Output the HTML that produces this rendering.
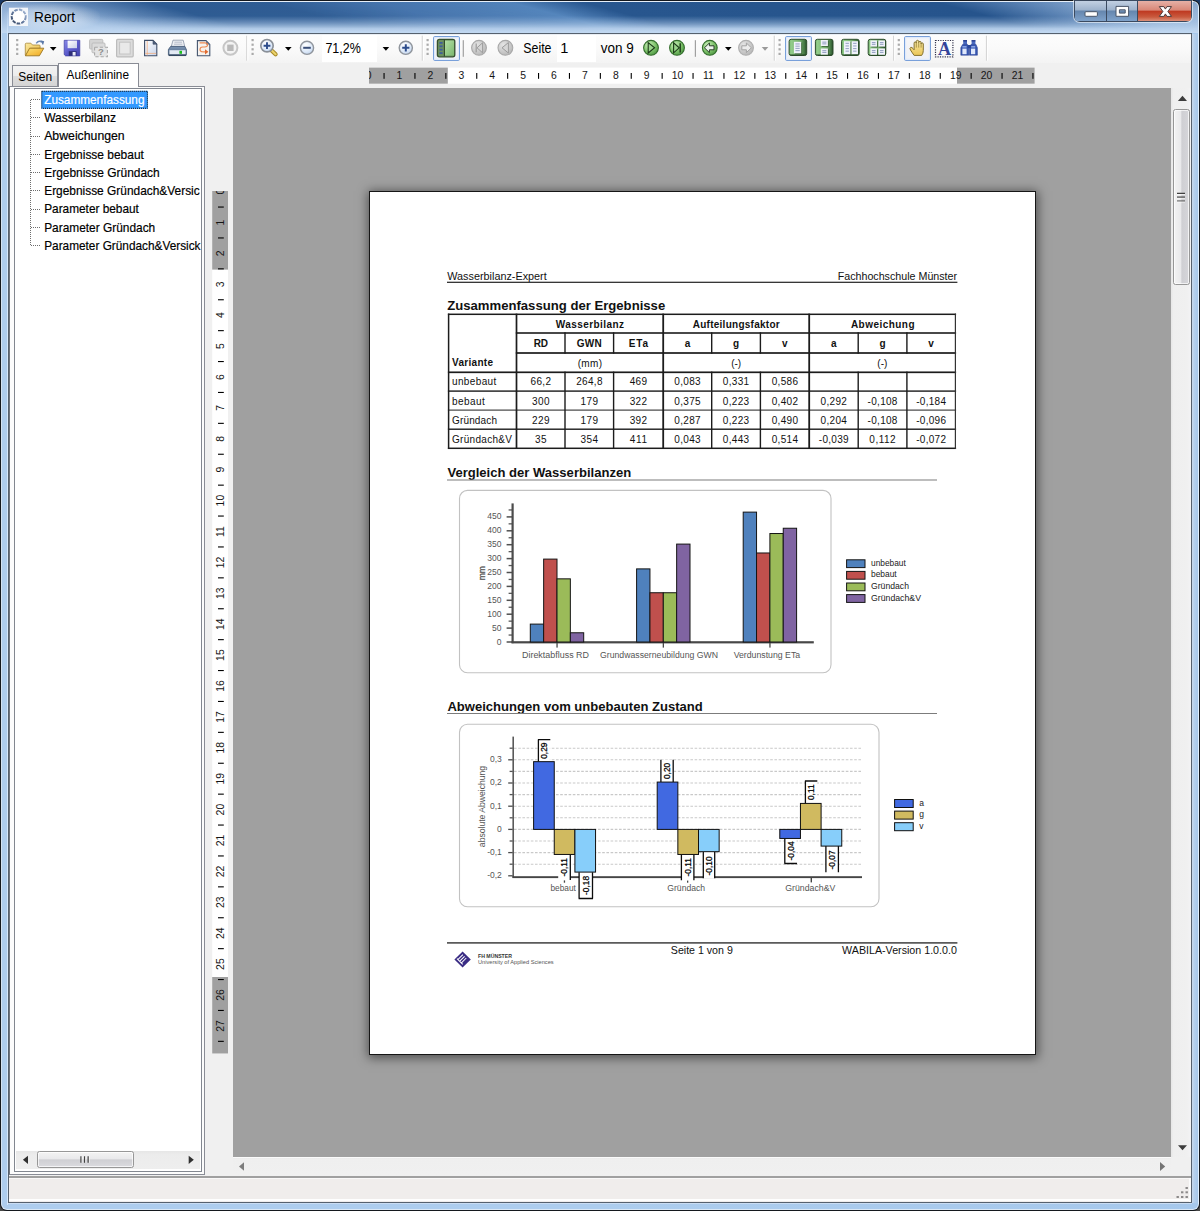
<!DOCTYPE html><html><head><meta charset="utf-8"><title>Report</title><style>
*{margin:0;padding:0;box-sizing:border-box}
html,body{width:1200px;height:1211px;overflow:hidden;background:#000}
body{font-family:"Liberation Sans", sans-serif;font-size:14px;color:#000}
#w{position:relative;width:1200px;height:1211px;overflow:hidden;background:#b1cfee}
.a{position:absolute}
svg{position:absolute;left:0;top:0;overflow:visible}
svg text{font-family:"Liberation Sans", sans-serif;white-space:pre}
</style></head><body><div id="w">
<div class="a" style="left:0;top:0;width:1200px;height:1211px;background:linear-gradient(to bottom,#1b3a66 0,#1d3050 50%,#4a4a4a 100%)"></div>
<div class="a" style="left:0;top:0;width:1200px;height:1211px;border-radius:7px 7px 7px 7px;background:#14181e"></div>
<div class="a" style="left:1px;top:1px;width:1198px;height:1209px;border-radius:6px;background:#dbe8f6"></div>
<div class="a" style="left:2px;top:2px;width:1196px;height:1207px;border-radius:5px;background:linear-gradient(to right,#aecdee 0,#adcdee 50%,#a6c8ec 100%)"></div>
<div class="a" style="left:2px;top:2px;width:1196px;height:31px;border-radius:5px 5px 0 0;background:linear-gradient(to bottom,#86a6ce 0,#a0bddf 50%,#c2d9f2 100%)"></div>
<div class="a" style="left:2px;top:2px;width:1196px;height:31px;border-radius:5px 5px 0 0;background:linear-gradient(15deg,rgba(44,90,145,0) 0,rgba(44,90,145,0) 9%,rgba(60,105,160,.55) 13.7%,rgba(40,86,142,.95) 20%,rgba(42,88,144,.95) 29%,rgba(62,110,168,.9) 37.4%,rgba(72,124,182,.85) 47.5%,rgba(40,86,142,1) 53%,rgba(38,84,140,1) 80%,rgba(60,105,160,.7) 85.5%,rgba(110,150,195,.3) 91%,rgba(130,170,210,0) 97%);-webkit-mask-image:linear-gradient(to bottom,#000 0,#000 45%,rgba(0,0,0,.5) 68%,rgba(0,0,0,.06) 86%,transparent 94%);mask-image:linear-gradient(to bottom,#000 0,#000 45%,rgba(0,0,0,.5) 68%,rgba(0,0,0,.06) 86%,transparent 94%)"></div>
<div class="a" style="left:6px;top:1px;width:1188px;height:1px;background:rgba(255,255,255,.32)"></div>
<div class="a" style="left:7px;top:10px;width:1px;height:1195px;background:linear-gradient(to bottom,rgba(214,231,251,0) 0,#d6e7fb 30px,#d6e7fb 100%)"></div>
<div class="a" style="left:1192px;top:34px;width:6px;height:1169px;background:linear-gradient(to right,#c8d9ec 0,#b4cfec 40%,#a6c7ea 100%)"></div>
<div class="a" style="left:1198px;top:8px;width:1px;height:1196px;background:#e0f0ff"></div>
<div class="a" style="left:1px;top:8px;width:1px;height:1196px;background:#d3e2f2"></div>
<div class="a" style="left:8px;top:33px;width:1184px;height:1169.8px;background:#56616e"></div>
<div class="a" style="left:9px;top:34px;width:1182px;height:1167.5px;background:#f0f0f0"></div>
<div class="a" style="left:4px;top:3px;width:96px;height:28px;border-radius:14px;background:radial-gradient(ellipse at center,rgba(255,255,255,.45) 0,rgba(255,255,255,.25) 45%,rgba(255,255,255,0) 75%)"></div>
<svg width="1200" height="34" viewBox="0 0 1200 34"><defs><linearGradient id="icG" x1="0" y1="1" x2="1" y2="0"><stop offset="0" stop-color="#2f3f5c"/><stop offset=".55" stop-color="#6f86ac"/><stop offset="1" stop-color="#a9bcd8"/></linearGradient></defs><rect x="8.9" y="7.7" width="19.1" height="18.3" fill="#f3f6fa"/><circle cx="18.7" cy="16.6" r="7" fill="#fff" stroke="url(#icG)" stroke-width="2" stroke-dasharray="3.6 1.1"/><circle cx="18.9" cy="16.4" r="5.5" fill="#fff"/><text x="34.1" y="21.8" font-size="14.6" fill="#000" font-weight="normal" text-anchor="start" textLength="41" lengthAdjust="spacingAndGlyphs">Report</text></svg>
<svg width="1200" height="34" viewBox="0 0 1200 34"><defs><linearGradient id="cbG" x1="0" y1="0" x2="0" y2="1"><stop offset="0" stop-color="#c2d0e2"/><stop offset=".45" stop-color="#9db2cc"/><stop offset=".5" stop-color="#6586ae"/><stop offset="1" stop-color="#7fa2ca"/></linearGradient><linearGradient id="cbR" x1="0" y1="0" x2="0" y2="1"><stop offset="0" stop-color="#e6b0a6"/><stop offset=".45" stop-color="#d98878"/><stop offset=".52" stop-color="#bf3a22"/><stop offset=".8" stop-color="#c95a3e"/><stop offset="1" stop-color="#dc907a"/></linearGradient><clipPath id="cbC"><path d="M1074 0H1192V16a6 6 0 0 1-6 6H1080a6 6 0 0 1-6-6Z"/></clipPath></defs><path d="M1073 0H1193V16.5a6.5 6.5 0 0 1-6.5 6.5H1079.5a6.5 6.5 0 0 1-6.5-6.5Z" fill="rgba(255,255,255,.55)"/><g clip-path="url(#cbC)"><rect x="1074" y="0" width="118" height="22" fill="#3b4a60"/><rect x="1075" y="1" width="31" height="20" fill="url(#cbG)"/><rect x="1107" y="1" width="30" height="20" fill="url(#cbG)"/><rect x="1138" y="1" width="53" height="20" fill="url(#cbR)"/></g><rect x="1085" y="11.7" width="12.4" height="4.6" rx="1" fill="#fff" stroke="#4a5668" stroke-width="1"/><path d="M1116 6.4h12.6v9.9h-12.6Z M1119.4 9.8v3.3h5.8v-3.3Z" fill="#fff" fill-rule="evenodd" stroke="#4a5668" stroke-width="1"/><path d="M1159.3 6.6h4.6l1.5 2.5 1.5-2.5h4.6l-3.6 4.9 3.6 4.9h-4.6l-1.5-2.5-1.5 2.5h-4.6l3.6-4.9Z" fill="#fff" stroke="#4c3a3a" stroke-width="1" stroke-linejoin="round"/></svg>
<div class="a" style="left:9px;top:1176px;width:1182px;height:2px;background:#a0a0a0"></div>
<div class="a" style="left:9px;top:1178px;width:1182px;height:23.5px;background:#f0edec"></div><div class="a" style="left:9px;top:1178px;width:1182px;height:1px;background:#f9f8f8"></div>
<div class="a" style="left:9px;top:1199.4px;width:1182px;height:2.1px;background:#fefefe"></div>
<div class="a" style="left:1189.4px;top:1178px;width:1.6px;height:23.5px;background:#fbfbfb"></div>
<svg width="1200" height="1211" viewBox="0 0 1200 1211"><rect x="1185.5" y="1187" width="2.4" height="2" fill="#8c8a8a"/><rect x="1181" y="1191.3" width="2.4" height="2" fill="#8c8a8a"/><rect x="1185.5" y="1191.3" width="2.4" height="2" fill="#8c8a8a"/><rect x="1176.5" y="1196" width="2.4" height="2" fill="#8c8a8a"/><rect x="1181" y="1196" width="2.4" height="2" fill="#8c8a8a"/><rect x="1185.5" y="1196" width="2.4" height="2" fill="#8c8a8a"/></svg>
<div class="a" style="left:8px;top:1203px;width:1184px;height:1px;background:#c9dcf3"></div>
<div class="a" style="left:9px;top:34px;width:1182px;height:29px;background:linear-gradient(to bottom,#fdfdfd 0,#fafafa 50%,#f3f3f3 100%)"></div>
<div class="a" style="left:9px;top:34px;width:1182px;height:1px;background:#e9eef4"></div>
<div class="a" style="left:322px;top:35px;width:55px;height:27px;background:#fff"></div>
<div class="a" style="left:557px;top:35px;width:39px;height:27px;background:#fff"></div>
<div class="a" style="left:433px;top:35.6px;width:26.9px;height:25.5px;border:1.4px solid #79a0da;border-radius:1.8px;background:linear-gradient(to bottom,#f6f6f8 0,#f2f2f5 60%,#eef1f7 100%);box-shadow:inset 0 0 0 1.2px #dfeafb"></div>
<div class="a" style="left:785px;top:35.6px;width:26.9px;height:25.5px;border:1.4px solid #79a0da;border-radius:1.8px;background:linear-gradient(to bottom,#f6f6f8 0,#f2f2f5 60%,#eef1f7 100%);box-shadow:inset 0 0 0 1.2px #dfeafb"></div>
<div class="a" style="left:904.1px;top:35.6px;width:26.9px;height:25.5px;border:1.4px solid #79a0da;border-radius:1.8px;background:linear-gradient(to bottom,#f6f6f8 0,#f2f2f5 60%,#eef1f7 100%);box-shadow:inset 0 0 0 1.2px #dfeafb"></div>
<svg width="1200" height="70" viewBox="0 0 1200 70"><defs>
<linearGradient id="gFold" x1="0" y1="0" x2="1" y2="1"><stop offset="0" stop-color="#fbe9a0"/><stop offset="1" stop-color="#e8b840"/></linearGradient>
<linearGradient id="gFold2" x1="0" y1="0" x2="1" y2="1"><stop offset="0" stop-color="#fde27a"/><stop offset="1" stop-color="#f0a820"/></linearGradient>
<linearGradient id="gSave" x1="0" y1="0" x2="1" y2="1"><stop offset="0" stop-color="#8a8ae8"/><stop offset=".5" stop-color="#5c5ccc"/><stop offset="1" stop-color="#4444b0"/></linearGradient>
<linearGradient id="gSaveW" x1="0" y1="0" x2="1" y2="1"><stop offset="0" stop-color="#ffffff"/><stop offset="1" stop-color="#c8d0e8"/></linearGradient>
<radialGradient id="gGreen" cx=".35" cy=".3" r=".8"><stop offset="0" stop-color="#c8eeb8"/><stop offset=".55" stop-color="#7fc46c"/><stop offset="1" stop-color="#47903c"/></radialGradient>
<radialGradient id="gGray" cx=".35" cy=".3" r=".8"><stop offset="0" stop-color="#e4e4e4"/><stop offset=".6" stop-color="#c9c9c9"/><stop offset="1" stop-color="#b4b4b4"/></radialGradient>
<radialGradient id="gLens" cx=".4" cy=".3" r=".8"><stop offset="0" stop-color="#ffffff"/><stop offset=".6" stop-color="#dde9f8"/><stop offset="1" stop-color="#b8cdea"/></radialGradient>
<linearGradient id="gGI" x1="0" y1="0" x2="1" y2="1"><stop offset="0" stop-color="#3f7a3f"/><stop offset=".5" stop-color="#7fc47f"/><stop offset="1" stop-color="#356a35"/></linearGradient>
<linearGradient id="gGI2" x1="0" y1="0" x2="1" y2="0"><stop offset="0" stop-color="#7ab872"/><stop offset=".12" stop-color="#92cc8a"/><stop offset=".6" stop-color="#74ac6c"/><stop offset=".9" stop-color="#3f703f"/><stop offset="1" stop-color="#234423"/></linearGradient>
<linearGradient id="gOutR" x1="0" y1="0" x2="1" y2="1"><stop offset="0" stop-color="#b4e0a6"/><stop offset="1" stop-color="#7cb870"/></linearGradient>
<linearGradient id="gPg" x1="0" y1="0" x2="1" y2="1"><stop offset="0" stop-color="#ffffff"/><stop offset="1" stop-color="#c8d4ea"/></linearGradient>
<linearGradient id="gBino" x1="0" y1="0" x2="1" y2="0"><stop offset="0" stop-color="#2c4aa0"/><stop offset=".5" stop-color="#a8c0ee"/><stop offset="1" stop-color="#3454a8"/></linearGradient>
<linearGradient id="gHand" x1="0" y1="0" x2="0" y2="1"><stop offset="0" stop-color="#f6e8a8"/><stop offset="1" stop-color="#ebc656"/></linearGradient>
<linearGradient id="gPrn" x1="0" y1="0" x2="0" y2="1"><stop offset="0" stop-color="#7e96b4"/><stop offset="1" stop-color="#4a6484"/></linearGradient>
</defs><rect x="16.099999999999998" y="39.0" width="2.2" height="2.2" fill="#aaaaaa"/><rect x="16.8" y="39.9" width="2.2" height="2" fill="#fff" opacity=".0"/><rect x="16.099999999999998" y="43.6" width="2.2" height="2.2" fill="#aaaaaa"/><rect x="16.8" y="44.5" width="2.2" height="2" fill="#fff" opacity=".0"/><rect x="16.099999999999998" y="48.2" width="2.2" height="2.2" fill="#aaaaaa"/><rect x="16.8" y="49.1" width="2.2" height="2" fill="#fff" opacity=".0"/><rect x="16.099999999999998" y="52.8" width="2.2" height="2.2" fill="#aaaaaa"/><rect x="16.8" y="53.699999999999996" width="2.2" height="2" fill="#fff" opacity=".0"/><path d="M25.3 55.2V44.2q0-1 1-1h4.6l1.6 1.8h6.6q1 0 1 1v2.4h-9.6l-4 6.8Z" fill="url(#gFold)" stroke="#a8883a" stroke-width=".8"/><path d="M29.6 48.2h14.2l-4.4 7.6H25.4Z" fill="url(#gFold2)" stroke="#9a7420" stroke-width=".9"/><path d="M36.2 43.4q2.6-3.4 5.6-1.2" fill="none" stroke="#6a88b4" stroke-width="1.5"/><path d="M40.4 40.2l3.8 1-1.2 4Z" fill="#5a78a8"/><path d="M49.9 46.9h6.6l-3.3 3.9Z" fill="#000"/><path d="M64.2 40.3h15.6v15.6h-14.2l-1.4-1.4Z" fill="url(#gSave)" stroke="#3c3ca0" stroke-width=".7"/><rect x="67.6" y="40.6" width="9.4" height="7.6" fill="url(#gSaveW)"/><rect x="68.8" y="51.2" width="7.8" height="4.6" fill="#2e2e78"/><rect x="72.6" y="52" width="3" height="3.6" fill="#e8ecf8"/><rect x="89.6" y="39.4" width="13.2" height="9.6" rx="1" fill="#d4d4d4" stroke="#bdbdbd" stroke-width="1"/><rect x="92" y="43" width="13" height="9.8" rx="1" fill="#dadada" stroke="#bdbdbd" stroke-width="1"/><rect x="94.6" y="47.2" width="12.8" height="9.6" fill="#e4e4e4" stroke="#a8a8a8" stroke-width="1.1" stroke-dasharray="3.2 2"/><text x="101" y="55.4" font-size="9.5" fill="#8e8e8e" font-weight="bold" text-anchor="middle">?</text><rect x="116.6" y="39.4" width="16.6" height="17.4" rx="1" fill="#dcdcdc" stroke="#bcbcbc" stroke-width="1.2"/><rect x="119.6" y="42.2" width="10.6" height="11.8" fill="#e9e9e9" stroke="#c4c4c4" stroke-width="1"/><path d="M144.6 40.4h8.4l3.8 3.8v11.6h-12.2Z" fill="url(#gPg)" stroke="#3e4e68" stroke-width="1.1"/><path d="M153 40.4v3.8h3.8Z" fill="#50607c" stroke="#3e4e68" stroke-width=".6"/><path d="M147.2 41v14.4M145.2 53.4h11" stroke="#f2aa78" stroke-width=".75" fill="none"/><path d="M173 40.2h10.2l1.6 6.6h-13.6Z" fill="#eef0f4" stroke="#8a96a8" stroke-width=".8"/><path d="M174.4 42.2h7.6M174 44.2h8.4" stroke="#a8b0c0" stroke-width=".8"/><path d="M170.6 46.4h14.2l1.6 3.2v5.2h-18v-5.2Z" fill="url(#gPrn)" stroke="#3c5270" stroke-width=".8"/><rect x="169.4" y="50.2" width="16.2" height="4" fill="#e4eaf4"/><rect x="179.4" y="50.8" width="2.6" height="3" fill="#1fc01f"/><path d="M168.6 55.4h17.6" stroke="#34485f" stroke-width="1.3"/><path d="M197.4 40.6h8.6l3.8 3.8v11.4h-12.4Z" fill="#f6f2ee" stroke="#44546e" stroke-width="1.1"/><path d="M206 40.6v3.8h3.8Z" fill="#5a6a86"/><path d="M199.6 42.8h5.2q2.8 0 2.8 2t-2.8 2.2h-2.2q-2.6.2-2.6 2.4t2.6 2.4h3" fill="none" stroke="#ee8a52" stroke-width="1.15"/><path d="M205 49.2l3.4 2.6-3.4 2.6Z" fill="#e06a30"/><circle cx="230.4" cy="47.8" r="7" fill="#f3f3f3" stroke="#c6c6c6" stroke-width="2"/><rect x="227.2" y="44.6" width="6.4" height="6.4" fill="#b9b9b9"/><rect x="246.1" y="35.7" width="1.2" height="25" fill="#d6d6d6"/><rect x="247.29999999999998" y="35.7" width="1" height="25" fill="#fff"/><rect x="251.5" y="39.0" width="2.2" height="2.2" fill="#aaaaaa"/><rect x="252.2" y="39.9" width="2.2" height="2" fill="#fff" opacity=".0"/><rect x="251.5" y="43.6" width="2.2" height="2.2" fill="#aaaaaa"/><rect x="252.2" y="44.5" width="2.2" height="2" fill="#fff" opacity=".0"/><rect x="251.5" y="48.2" width="2.2" height="2.2" fill="#aaaaaa"/><rect x="252.2" y="49.1" width="2.2" height="2" fill="#fff" opacity=".0"/><rect x="251.5" y="52.8" width="2.2" height="2.2" fill="#aaaaaa"/><rect x="252.2" y="53.699999999999996" width="2.2" height="2" fill="#fff" opacity=".0"/><path d="M271.6 50.4l4 3.9" stroke="#a88a2a" stroke-width="4.2" stroke-linecap="round"/><path d="M272 50.8l3.6 3.4" stroke="#ecd46a" stroke-width="2.2" stroke-linecap="round"/><circle cx="267" cy="45.7" r="6.2" fill="url(#gLens)" stroke="#8a9098" stroke-width="1.6"/><path d="M263.6 45.7h6.8M267 42.3v6.8" stroke="#2c4c8c" stroke-width="1.9"/><path d="M285 46.9h6.6l-3.3 3.9Z" fill="#000"/><circle cx="307" cy="47.8" r="6.6" fill="url(#gLens)" stroke="#90959c" stroke-width="1.4"/><path d="M303.2 47.8h7.6" stroke="#3a4e78" stroke-width="2"/><text x="325.4" y="52.6" font-size="14.6" fill="#000" font-weight="normal" text-anchor="start" textLength="35.4" lengthAdjust="spacingAndGlyphs">71,2%</text><path d="M382.6 46.9h6.6l-3.3 3.9Z" fill="#000"/><circle cx="405.8" cy="47.8" r="6.6" fill="url(#gLens)" stroke="#90959c" stroke-width="1.4"/><path d="M402.2 47.8h7.2M405.8 44.2v7.2" stroke="#2c4c8c" stroke-width="2"/><rect x="421.7" y="35.7" width="1.2" height="25" fill="#d6d6d6"/><rect x="422.90000000000003" y="35.7" width="1" height="25" fill="#fff"/><rect x="426.5" y="39.0" width="2.2" height="2.2" fill="#aaaaaa"/><rect x="427.20000000000005" y="39.9" width="2.2" height="2" fill="#fff" opacity=".0"/><rect x="426.5" y="43.6" width="2.2" height="2.2" fill="#aaaaaa"/><rect x="427.20000000000005" y="44.5" width="2.2" height="2" fill="#fff" opacity=".0"/><rect x="426.5" y="48.2" width="2.2" height="2.2" fill="#aaaaaa"/><rect x="427.20000000000005" y="49.1" width="2.2" height="2" fill="#fff" opacity=".0"/><rect x="426.5" y="52.8" width="2.2" height="2.2" fill="#aaaaaa"/><rect x="427.20000000000005" y="53.699999999999996" width="2.2" height="2" fill="#fff" opacity=".0"/><rect x="437.4" y="39.4" width="17.4" height="17.4" rx="2" fill="#6c9060" stroke="#35502f" stroke-width="1.3"/><rect x="445" y="40.6" width="9" height="15" fill="url(#gOutR)"/><path d="M444.4 39.6v17" stroke="#2f4a2a" stroke-width="1.1"/><rect x="439.4" y="42" width="3.2" height="1.8" fill="#3f5f9a"/><rect x="439.4" y="45.4" width="3.2" height="1.8" fill="#3f5f9a"/><rect x="439.4" y="48.8" width="3.2" height="1.8" fill="#3f5f9a"/><rect x="439.4" y="52.2" width="3.2" height="1.8" fill="#3f5f9a"/><rect x="462.7" y="40.2" width="1.2" height="16.6" fill="#a0a0a0"/><circle cx="479" cy="47.8" r="7.4" fill="url(#gGray)" stroke="#a9a9a9" stroke-width="1.1"/><path d="M476.2 43.4v8.8" stroke="#9c9c9c" stroke-width="1.2"/><path d="M482.6 42.8v10l-5.6-5Z" fill="#d6d6d6" stroke="#9c9c9c" stroke-width="1"/><circle cx="505.4" cy="47.8" r="7.4" fill="url(#gGray)" stroke="#a9a9a9" stroke-width="1.1"/><path d="M508.4 42.6v10.4l-6.4-5.2Z" fill="#d6d6d6" stroke="#9c9c9c" stroke-width="1"/><text x="523.3" y="52.6" font-size="14.6" fill="#000" font-weight="normal" text-anchor="start" textLength="28.2" lengthAdjust="spacingAndGlyphs">Seite</text><text x="560.2" y="52.6" font-size="14.6" fill="#000" font-weight="normal" text-anchor="start">1</text><text x="600.8" y="52.6" font-size="14.6" fill="#000" font-weight="normal" text-anchor="start" textLength="33" lengthAdjust="spacingAndGlyphs">von 9</text><circle cx="651" cy="47.8" r="7.4" fill="url(#gGreen)" stroke="#356e2e" stroke-width="1.1"/><path d="M648.2 42.6v10.4l6.4-5.2Z" fill="#9ad48c" stroke="#1c3a18" stroke-width="1.1"/><circle cx="677" cy="47.8" r="7.4" fill="url(#gGreen)" stroke="#356e2e" stroke-width="1.1"/><path d="M673.6 42.8v10l5.6-5Z" fill="#9ad48c" stroke="#1c3a18" stroke-width="1.1"/><path d="M680.2 43.2v9.2" stroke="#1c3a18" stroke-width="1.4"/><rect x="694.8" y="40.2" width="1.2" height="16.6" fill="#a0a0a0"/><circle cx="709.8" cy="47.8" r="7.4" fill="url(#gGreen)" stroke="#356e2e" stroke-width="1.1"/><path d="M704.4 47.8l5-4.8v2.8h4.6v4h-4.6v2.8Z" fill="#eef4ee" stroke="#2a3e28" stroke-width="1"/><path d="M725 46.9h6.6l-3.3 3.9Z" fill="#000"/><circle cx="746" cy="47.8" r="7.4" fill="url(#gGray)" stroke="#b0b0b0" stroke-width="1.1"/><path d="M751.4 47.8l-5-4.8v2.8h-4.6v4h4.6v2.8Z" fill="#ececec" stroke="#a4a4a4" stroke-width="1"/><path d="M761.7 46.9h6.6l-3.3 3.9Z" fill="#9a9a9a"/><rect x="773.6999999999999" y="35.7" width="1.2" height="25" fill="#d6d6d6"/><rect x="774.9" y="35.7" width="1" height="25" fill="#fff"/><rect x="778.5" y="39.0" width="2.2" height="2.2" fill="#aaaaaa"/><rect x="779.2" y="39.9" width="2.2" height="2" fill="#fff" opacity=".0"/><rect x="778.5" y="43.6" width="2.2" height="2.2" fill="#aaaaaa"/><rect x="779.2" y="44.5" width="2.2" height="2" fill="#fff" opacity=".0"/><rect x="778.5" y="48.2" width="2.2" height="2.2" fill="#aaaaaa"/><rect x="779.2" y="49.1" width="2.2" height="2" fill="#fff" opacity=".0"/><rect x="778.5" y="52.8" width="2.2" height="2.2" fill="#aaaaaa"/><rect x="779.2" y="53.699999999999996" width="2.2" height="2" fill="#fff" opacity=".0"/><rect x="789.1" y="39.3" width="17.6" height="16.2" rx="2" fill="url(#gGI2)" stroke="#2e4e2e" stroke-width="1"/><rect x="790.1" y="54.2" width="15.6" height="1.2" fill="#1f3f1f" opacity=".6"/><rect x="794.8" y="42.699999999999996" width="7.3" height="11.5" fill="#2c502c" opacity=".7"/><rect x="793.9" y="41.8" width="7.3" height="11.5" fill="#f0f2fa"/><rect x="795.4" y="43.40" width="4.3" height="1.1" fill="#9aa6c6"/><rect x="795.4" y="45.62" width="4.3" height="1.1" fill="#9aa6c6"/><rect x="795.4" y="47.85" width="4.3" height="1.1" fill="#9aa6c6"/><rect x="795.4" y="50.08" width="4.3" height="1.1" fill="#9aa6c6"/><rect x="815.4" y="39.3" width="17.6" height="16.2" rx="2" fill="url(#gGI2)" stroke="#2e4e2e" stroke-width="1"/><rect x="816.4" y="54.2" width="15.6" height="1.2" fill="#1f3f1f" opacity=".6"/><rect x="821.6999999999999" y="40.9" width="7.1" height="6" fill="#2c502c" opacity=".7"/><rect x="820.8" y="40" width="7.1" height="6" fill="#f0f2fa"/><rect x="822.3" y="41.60" width="4.1" height="1.1" fill="#9aa6c6"/><rect x="822.3" y="43.30" width="4.1" height="1.1" fill="#9aa6c6"/><rect x="821.6999999999999" y="49.4" width="7.1" height="6.2" fill="#2c502c" opacity=".7"/><rect x="820.8" y="48.5" width="7.1" height="6.2" fill="#f0f2fa"/><rect x="822.3" y="50.10" width="4.1" height="1.1" fill="#9aa6c6"/><rect x="822.3" y="51.90" width="4.1" height="1.1" fill="#9aa6c6"/><rect x="841.6" y="39.3" width="17.6" height="16.2" rx="2" fill="url(#gGI2)" stroke="#2e4e2e" stroke-width="1"/><rect x="842.6" y="54.2" width="15.6" height="1.2" fill="#1f3f1f" opacity=".6"/><rect x="844.9" y="42.1" width="6.4" height="13" fill="#2c502c" opacity=".7"/><rect x="844" y="41.2" width="6.4" height="13" fill="#f0f2fa"/><rect x="845.5" y="42.80" width="3.4000000000000004" height="1.1" fill="#9aa6c6"/><rect x="845.5" y="45.40" width="3.4000000000000004" height="1.1" fill="#9aa6c6"/><rect x="845.5" y="48.00" width="3.4000000000000004" height="1.1" fill="#9aa6c6"/><rect x="845.5" y="50.60" width="3.4000000000000004" height="1.1" fill="#9aa6c6"/><rect x="852.5" y="42.1" width="6.4" height="13" fill="#2c502c" opacity=".7"/><rect x="851.6" y="41.2" width="6.4" height="13" fill="#f0f2fa"/><rect x="853.1" y="42.80" width="3.4000000000000004" height="1.1" fill="#9aa6c6"/><rect x="853.1" y="45.40" width="3.4000000000000004" height="1.1" fill="#9aa6c6"/><rect x="853.1" y="48.00" width="3.4000000000000004" height="1.1" fill="#9aa6c6"/><rect x="853.1" y="50.60" width="3.4000000000000004" height="1.1" fill="#9aa6c6"/><rect x="868.2" y="39.3" width="17.6" height="16.2" rx="2" fill="url(#gGI2)" stroke="#2e4e2e" stroke-width="1"/><rect x="869.2" y="54.2" width="15.6" height="1.2" fill="#1f3f1f" opacity=".6"/><rect x="871.3" y="41.3" width="6.6" height="6.2" fill="#2c502c" opacity=".7"/><rect x="870.4" y="40.4" width="6.6" height="6.2" fill="#f0f2fa"/><rect x="871.9" y="42.00" width="3.5999999999999996" height="1.1" fill="#9aa6c6"/><rect x="871.9" y="43.80" width="3.5999999999999996" height="1.1" fill="#9aa6c6"/><rect x="879.3" y="41.3" width="6.6" height="6.2" fill="#2c502c" opacity=".7"/><rect x="878.4" y="40.4" width="6.6" height="6.2" fill="#f0f2fa"/><rect x="879.9" y="42.00" width="3.5999999999999996" height="1.1" fill="#9aa6c6"/><rect x="879.9" y="43.80" width="3.5999999999999996" height="1.1" fill="#9aa6c6"/><rect x="871.3" y="49.3" width="6.6" height="6.4" fill="#2c502c" opacity=".7"/><rect x="870.4" y="48.4" width="6.6" height="6.4" fill="#f0f2fa"/><rect x="871.9" y="50.00" width="3.5999999999999996" height="1.1" fill="#9aa6c6"/><rect x="871.9" y="51.90" width="3.5999999999999996" height="1.1" fill="#9aa6c6"/><rect x="879.3" y="49.3" width="6.6" height="6.4" fill="#2c502c" opacity=".7"/><rect x="878.4" y="48.4" width="6.6" height="6.4" fill="#f0f2fa"/><rect x="879.9" y="50.00" width="3.5999999999999996" height="1.1" fill="#9aa6c6"/><rect x="879.9" y="51.90" width="3.5999999999999996" height="1.1" fill="#9aa6c6"/><rect x="893.0" y="35.7" width="1.2" height="25" fill="#d6d6d6"/><rect x="894.2" y="35.7" width="1" height="25" fill="#fff"/><rect x="897.6999999999999" y="39.0" width="2.2" height="2.2" fill="#aaaaaa"/><rect x="898.4" y="39.9" width="2.2" height="2" fill="#fff" opacity=".0"/><rect x="897.6999999999999" y="43.6" width="2.2" height="2.2" fill="#aaaaaa"/><rect x="898.4" y="44.5" width="2.2" height="2" fill="#fff" opacity=".0"/><rect x="897.6999999999999" y="48.2" width="2.2" height="2.2" fill="#aaaaaa"/><rect x="898.4" y="49.1" width="2.2" height="2" fill="#fff" opacity=".0"/><rect x="897.6999999999999" y="52.8" width="2.2" height="2.2" fill="#aaaaaa"/><rect x="898.4" y="53.699999999999996" width="2.2" height="2" fill="#fff" opacity=".0"/><g transform="translate(0.9 0.2)"><path d="M913.2 55.2q-1.6-2.2-3.6-5.4q-1.2-2 .2-2.6q1.2-.4 2.4 1.2l1 1.2v-6.6q0-1.3 1.1-1.3t1.1 1.3v-1.6q0-1.3 1.2-1.3t1.2 1.3v1q0-1.2 1.2-1.2t1.2 1.2v1.4q0-1.1 1.1-1.1t1.1 1.1v6.4q0 3-1.6 5Z" fill="url(#gHand)" stroke="#85722f" stroke-width="1" stroke-linejoin="round"/><path d="M915.4 43v4.4M917.8 42.6v4.8M920.2 43.2v4.2" stroke="#9a8438" stroke-width=".8"/></g><rect x="935.5" y="40.5" width="17.4" height="16.4" fill="none" stroke="#34344c" stroke-width="1.2" stroke-dasharray="1.2 1.2"/><text x="944.4" y="55.2" style="font-family:&quot;Liberation Serif&quot;,serif" font-weight="bold" font-size="18" fill="#34449a" text-anchor="middle">A</text><rect x="963.2" y="40.2" width="3.8" height="4.6" fill="#4a6ac0"/><rect x="971.6" y="40.2" width="3.8" height="4.6" fill="#4a6ac0"/><rect x="963.2" y="40.2" width="3.8" height="1.2" fill="#1e3484"/><rect x="971.6" y="40.2" width="3.8" height="1.2" fill="#1e3484"/><path d="M962.6 44.4h5l1.2 3.4v7.4h-8v-7.4Z" fill="#3656b0" stroke="#22388a" stroke-width=".5"/><path d="M971 44.4h5l1.4 3.4v7.4h-8v-7.4Z" fill="#3656b0" stroke="#22388a" stroke-width=".5"/><rect x="962.4" y="48.6" width="4.2" height="5.6" fill="#dfe8fb"/><rect x="971" y="48.6" width="4.2" height="5.6" fill="#dfe8fb"/><rect x="962.4" y="46" width="4.2" height="1.6" fill="#8aa4e4"/><rect x="971" y="46" width="4.2" height="1.6" fill="#8aa4e4"/><rect x="967.6" y="45" width="3.6" height="3.2" fill="#2a469a"/><rect x="985.9" y="35.7" width="1.2" height="25" fill="#d6d6d6"/><rect x="987.1" y="35.7" width="1" height="25" fill="#fff"/></svg>
<div class="a" style="left:9px;top:86px;width:196px;height:1089px;background:#fcfcfc;border:1px solid #898c95;border-left-color:#70757e"></div>
<div class="a" style="left:12px;top:65.4px;width:46px;height:21px;border:1px solid #898c95;border-bottom:none;background:linear-gradient(to bottom,#f3f3f3 0,#ececec 50%,#dedede 52%,#d4d4d4 100%)"></div>
<div class="a" style="left:57.6px;top:63px;width:81.4px;height:24.4px;border:1px solid #898c95;border-bottom:none;background:#fff"></div>
<div class="a" style="left:13.6px;top:88px;width:188.9px;height:1083.6px;background:#fff;border:1px solid #828790"></div>
<svg width="204" height="1211" viewBox="0 0 204 1211" style="overflow:hidden"><text x="18.3" y="80.8" font-size="13.6" fill="#000" font-weight="normal" text-anchor="start" textLength="33.8" lengthAdjust="spacingAndGlyphs">Seiten</text><text x="66.6" y="79" font-size="13.6" fill="#000" font-weight="normal" text-anchor="start" textLength="62.4" lengthAdjust="spacingAndGlyphs">Außenlinine</text><rect x="41.3" y="90.8" width="106.6" height="18" fill="#3399ff"/><rect x="41.8" y="91.3" width="105.6" height="17" fill="none" stroke="#1a1208" stroke-width="1" stroke-dasharray="1 1"/><path d="M30.5 99.55V245.79000000000002" stroke="#6e6e6e" stroke-width="1" stroke-dasharray="1 1" shape-rendering="crispEdges"/><path d="M30.5 99.50H40" stroke="#6e6e6e" stroke-width="1" stroke-dasharray="1 1" shape-rendering="crispEdges"/><text x="44.2" y="103.75" font-size="13.4" fill="#fff" font-weight="normal" text-anchor="start" textLength="100.3" lengthAdjust="spacingAndGlyphs" stroke="#fff" stroke-width=".2">Zusammenfassung</text><path d="M30.5 117.78H40" stroke="#6e6e6e" stroke-width="1" stroke-dasharray="1 1" shape-rendering="crispEdges"/><text x="44.2" y="122.03" font-size="13.4" fill="#000" font-weight="normal" text-anchor="start" textLength="71.7" lengthAdjust="spacingAndGlyphs" stroke="#000" stroke-width=".2">Wasserbilanz</text><path d="M30.5 136.06H40" stroke="#6e6e6e" stroke-width="1" stroke-dasharray="1 1" shape-rendering="crispEdges"/><text x="44.2" y="140.31" font-size="13.4" fill="#000" font-weight="normal" text-anchor="start" textLength="80.5" lengthAdjust="spacingAndGlyphs" stroke="#000" stroke-width=".2">Abweichungen</text><path d="M30.5 154.34H40" stroke="#6e6e6e" stroke-width="1" stroke-dasharray="1 1" shape-rendering="crispEdges"/><text x="44.2" y="158.59" font-size="13.4" fill="#000" font-weight="normal" text-anchor="start" textLength="99.7" lengthAdjust="spacingAndGlyphs" stroke="#000" stroke-width=".2">Ergebnisse bebaut</text><path d="M30.5 172.62H40" stroke="#6e6e6e" stroke-width="1" stroke-dasharray="1 1" shape-rendering="crispEdges"/><text x="44.2" y="176.87" font-size="13.4" fill="#000" font-weight="normal" text-anchor="start" textLength="115.5" lengthAdjust="spacingAndGlyphs" stroke="#000" stroke-width=".2">Ergebnisse Gründach</text><path d="M30.5 190.90H40" stroke="#6e6e6e" stroke-width="1" stroke-dasharray="1 1" shape-rendering="crispEdges"/><text x="44.2" y="195.15" font-size="13.4" fill="#000" font-weight="normal" text-anchor="start" textLength="155.5" lengthAdjust="spacingAndGlyphs" stroke="#000" stroke-width=".2">Ergebnisse Gründach&amp;Versic</text><path d="M30.5 209.18H40" stroke="#6e6e6e" stroke-width="1" stroke-dasharray="1 1" shape-rendering="crispEdges"/><text x="44.2" y="213.43" font-size="13.4" fill="#000" font-weight="normal" text-anchor="start" textLength="94.7" lengthAdjust="spacingAndGlyphs" stroke="#000" stroke-width=".2">Parameter bebaut</text><path d="M30.5 227.46H40" stroke="#6e6e6e" stroke-width="1" stroke-dasharray="1 1" shape-rendering="crispEdges"/><text x="44.2" y="231.71" font-size="13.4" fill="#000" font-weight="normal" text-anchor="start" textLength="111" lengthAdjust="spacingAndGlyphs" stroke="#000" stroke-width=".2">Parameter Gründach</text><path d="M30.5 245.74H40" stroke="#6e6e6e" stroke-width="1" stroke-dasharray="1 1" shape-rendering="crispEdges"/><text x="44.2" y="249.99" font-size="13.4" fill="#000" font-weight="normal" text-anchor="start" textLength="156.3" lengthAdjust="spacingAndGlyphs" stroke="#000" stroke-width=".2">Parameter Gründach&amp;Versick</text></svg>
<div class="a" style="left:16px;top:1150.9px;width:184.4px;height:17.8px;background:linear-gradient(to bottom,#e6e6e6 0,#ececec 20%,#eeeeee 100%)"></div>
<div class="a" style="left:37.2px;top:1151.4px;width:96.8px;height:16.4px;border:1px solid #979797;border-radius:2.5px;background:linear-gradient(to bottom,#f3f3f3 0,#e9e9eb 46%,#cfcfd3 52%,#dbdbdf 100%);box-shadow:inset 0 0 0 1px rgba(255,255,255,.7)"></div>
<svg width="1200" height="1211" viewBox="0 0 1200 1211"><path d="M28 1155.7v8.2l-5.1-4.1Z" fill="#303030"/><path d="M188.7 1155.7v8.2l5.1-4.1Z" fill="#303030"/><path d="M81 1156.2v6.6M84.6 1156.2v6.6M88.2 1156.2v6.6" stroke="#404040" stroke-width="1.3"/><path d="M82.1 1156.2v6.6M85.7 1156.2v6.6M89.3 1156.2v6.6" stroke="#fff" stroke-width=".8" opacity=".8"/></svg>
<div class="a" style="left:233px;top:88px;width:938px;height:1069px;background:#a0a0a0"></div>
<div class="a" style="left:1171px;top:88px;width:20px;height:1069px;background:linear-gradient(to right,#e6e6e6 0,#efefef 12%,#f0f0f0 80%,#f3f3f5 100%)"></div>
<div class="a" style="left:233px;top:1157px;width:938px;height:19px;background:linear-gradient(to bottom,#e8e8e8 0,#efefef 12%,#f0f0f0 100%)"></div>
<div class="a" style="left:1171px;top:1157px;width:20px;height:19px;background:#f0f0f0"></div>
<div class="a" style="left:233px;top:1156.6px;width:938px;height:1px;background:#fafafa"></div>
<div class="a" style="left:1173.1px;top:109.2px;width:16.7px;height:176px;border:1px solid #979797;border-radius:2.5px;background:linear-gradient(to right,#f3f3f3 0,#e9e9eb 46%,#cfcfd3 52%,#d6d6da 100%);box-shadow:inset 0 0 0 1px rgba(255,255,255,.7)"></div>
<svg width="1200" height="1211" viewBox="0 0 1200 1211"><path d="M1177.9 100.9L1182.5 95.7L1187 100.9Z" fill="#3c3c3c"/><path d="M1178.4 100l2.8-2.6 2.8 2.6Z" fill="#8a8a8a" opacity=".0"/><path d="M1178 1145.2H1187L1182.5 1150.2Z" fill="#3c3c3c"/><path d="M244 1162.3v8.5l-5-4.2Z" fill="#7d7d7d"/><path d="M1160 1162v9l5.2-4.5Z" fill="#747474"/><path d="M1177 193.4h8M1177 197.2h8M1177 201h8" stroke="#404040" stroke-width="1.2"/><path d="M1177 194.5h8M1177 198.3h8M1177 202.1h8" stroke="#fff" stroke-width=".8" opacity=".8"/></svg>
<svg width="1200" height="100" viewBox="0 0 1200 100"><defs><clipPath id="hrc"><rect x="369" y="67" width="665.8" height="17"/></clipPath></defs><g clip-path="url(#hrc)"><rect x="369" y="67.6" width="665.8" height="16.1" fill="#fff"/><rect x="369" y="67.6" width="78.8" height="16.1" fill="#a0a0a0"/><rect x="957" y="67.6" width="77.8" height="16.1" fill="#a0a0a0"/><text x="368.6" y="79" font-size="10.4" fill="#151515" text-anchor="middle">0</text><rect x="383.50" y="73" width="1.1" height="5.8" fill="#000"/><text x="399.5" y="79" font-size="10.4" fill="#151515" text-anchor="middle">1</text><rect x="414.40" y="73" width="1.1" height="5.8" fill="#000"/><text x="430.4" y="79" font-size="10.4" fill="#151515" text-anchor="middle">2</text><rect x="445.30" y="73" width="1.1" height="5.8" fill="#000"/><text x="461.3" y="79" font-size="10.4" fill="#151515" text-anchor="middle">3</text><rect x="476.20" y="73" width="1.1" height="5.8" fill="#000"/><text x="492.2" y="79" font-size="10.4" fill="#151515" text-anchor="middle">4</text><rect x="507.10" y="73" width="1.1" height="5.8" fill="#000"/><text x="523.1" y="79" font-size="10.4" fill="#151515" text-anchor="middle">5</text><rect x="538.00" y="73" width="1.1" height="5.8" fill="#000"/><text x="554.0" y="79" font-size="10.4" fill="#151515" text-anchor="middle">6</text><rect x="568.90" y="73" width="1.1" height="5.8" fill="#000"/><text x="584.9" y="79" font-size="10.4" fill="#151515" text-anchor="middle">7</text><rect x="599.80" y="73" width="1.1" height="5.8" fill="#000"/><text x="615.8" y="79" font-size="10.4" fill="#151515" text-anchor="middle">8</text><rect x="630.70" y="73" width="1.1" height="5.8" fill="#000"/><text x="646.7" y="79" font-size="10.4" fill="#151515" text-anchor="middle">9</text><rect x="661.60" y="73" width="1.1" height="5.8" fill="#000"/><text x="677.6" y="79" font-size="10.4" fill="#151515" text-anchor="middle">10</text><rect x="692.50" y="73" width="1.1" height="5.8" fill="#000"/><text x="708.5" y="79" font-size="10.4" fill="#151515" text-anchor="middle">11</text><rect x="723.40" y="73" width="1.1" height="5.8" fill="#000"/><text x="739.4" y="79" font-size="10.4" fill="#151515" text-anchor="middle">12</text><rect x="754.30" y="73" width="1.1" height="5.8" fill="#000"/><text x="770.3" y="79" font-size="10.4" fill="#151515" text-anchor="middle">13</text><rect x="785.20" y="73" width="1.1" height="5.8" fill="#000"/><text x="801.2" y="79" font-size="10.4" fill="#151515" text-anchor="middle">14</text><rect x="816.10" y="73" width="1.1" height="5.8" fill="#000"/><text x="832.1" y="79" font-size="10.4" fill="#151515" text-anchor="middle">15</text><rect x="847.00" y="73" width="1.1" height="5.8" fill="#000"/><text x="863.0" y="79" font-size="10.4" fill="#151515" text-anchor="middle">16</text><rect x="877.90" y="73" width="1.1" height="5.8" fill="#000"/><text x="893.9" y="79" font-size="10.4" fill="#151515" text-anchor="middle">17</text><rect x="908.80" y="73" width="1.1" height="5.8" fill="#000"/><text x="924.8" y="79" font-size="10.4" fill="#151515" text-anchor="middle">18</text><rect x="939.70" y="73" width="1.1" height="5.8" fill="#000"/><text x="955.7" y="79" font-size="10.4" fill="#151515" text-anchor="middle">19</text><rect x="970.60" y="73" width="1.1" height="5.8" fill="#000"/><text x="986.6" y="79" font-size="10.4" fill="#151515" text-anchor="middle">20</text><rect x="1001.50" y="73" width="1.1" height="5.8" fill="#000"/><text x="1017.5" y="79" font-size="10.4" fill="#151515" text-anchor="middle">21</text><rect x="1032.40" y="73" width="1.1" height="5.8" fill="#000"/></g></svg>
<svg width="1200" height="1211" viewBox="0 0 1200 1211"><defs><clipPath id="vrc"><rect x="212" y="191" width="17" height="862.4"/></clipPath></defs><g clip-path="url(#vrc)"><rect x="212.2" y="191" width="15.8" height="863" fill="#fff"/><rect x="212.2" y="191" width="15.8" height="78.6" fill="#a0a0a0"/><rect x="212.2" y="977" width="15.8" height="77" fill="#a0a0a0"/><text transform="translate(224 191.6) rotate(-90)" font-size="10.4" fill="#151515" text-anchor="middle">0</text><rect x="218" y="206.50" width="5.8" height="1.1" fill="#000"/><text transform="translate(224 222.5) rotate(-90)" font-size="10.4" fill="#151515" text-anchor="middle">1</text><rect x="218" y="237.40" width="5.8" height="1.1" fill="#000"/><text transform="translate(224 253.4) rotate(-90)" font-size="10.4" fill="#151515" text-anchor="middle">2</text><rect x="218" y="268.30" width="5.8" height="1.1" fill="#000"/><text transform="translate(224 284.3) rotate(-90)" font-size="10.4" fill="#151515" text-anchor="middle">3</text><rect x="218" y="299.20" width="5.8" height="1.1" fill="#000"/><text transform="translate(224 315.2) rotate(-90)" font-size="10.4" fill="#151515" text-anchor="middle">4</text><rect x="218" y="330.10" width="5.8" height="1.1" fill="#000"/><text transform="translate(224 346.1) rotate(-90)" font-size="10.4" fill="#151515" text-anchor="middle">5</text><rect x="218" y="361.00" width="5.8" height="1.1" fill="#000"/><text transform="translate(224 377.0) rotate(-90)" font-size="10.4" fill="#151515" text-anchor="middle">6</text><rect x="218" y="391.90" width="5.8" height="1.1" fill="#000"/><text transform="translate(224 407.9) rotate(-90)" font-size="10.4" fill="#151515" text-anchor="middle">7</text><rect x="218" y="422.80" width="5.8" height="1.1" fill="#000"/><text transform="translate(224 438.8) rotate(-90)" font-size="10.4" fill="#151515" text-anchor="middle">8</text><rect x="218" y="453.70" width="5.8" height="1.1" fill="#000"/><text transform="translate(224 469.7) rotate(-90)" font-size="10.4" fill="#151515" text-anchor="middle">9</text><rect x="218" y="484.60" width="5.8" height="1.1" fill="#000"/><text transform="translate(224 500.6) rotate(-90)" font-size="10.4" fill="#151515" text-anchor="middle">10</text><rect x="218" y="515.50" width="5.8" height="1.1" fill="#000"/><text transform="translate(224 531.5) rotate(-90)" font-size="10.4" fill="#151515" text-anchor="middle">11</text><rect x="218" y="546.40" width="5.8" height="1.1" fill="#000"/><text transform="translate(224 562.4) rotate(-90)" font-size="10.4" fill="#151515" text-anchor="middle">12</text><rect x="218" y="577.30" width="5.8" height="1.1" fill="#000"/><text transform="translate(224 593.3) rotate(-90)" font-size="10.4" fill="#151515" text-anchor="middle">13</text><rect x="218" y="608.20" width="5.8" height="1.1" fill="#000"/><text transform="translate(224 624.2) rotate(-90)" font-size="10.4" fill="#151515" text-anchor="middle">14</text><rect x="218" y="639.10" width="5.8" height="1.1" fill="#000"/><text transform="translate(224 655.1) rotate(-90)" font-size="10.4" fill="#151515" text-anchor="middle">15</text><rect x="218" y="670.00" width="5.8" height="1.1" fill="#000"/><text transform="translate(224 686.0) rotate(-90)" font-size="10.4" fill="#151515" text-anchor="middle">16</text><rect x="218" y="700.90" width="5.8" height="1.1" fill="#000"/><text transform="translate(224 716.9) rotate(-90)" font-size="10.4" fill="#151515" text-anchor="middle">17</text><rect x="218" y="731.80" width="5.8" height="1.1" fill="#000"/><text transform="translate(224 747.8) rotate(-90)" font-size="10.4" fill="#151515" text-anchor="middle">18</text><rect x="218" y="762.70" width="5.8" height="1.1" fill="#000"/><text transform="translate(224 778.7) rotate(-90)" font-size="10.4" fill="#151515" text-anchor="middle">19</text><rect x="218" y="793.60" width="5.8" height="1.1" fill="#000"/><text transform="translate(224 809.6) rotate(-90)" font-size="10.4" fill="#151515" text-anchor="middle">20</text><rect x="218" y="824.50" width="5.8" height="1.1" fill="#000"/><text transform="translate(224 840.5) rotate(-90)" font-size="10.4" fill="#151515" text-anchor="middle">21</text><rect x="218" y="855.40" width="5.8" height="1.1" fill="#000"/><text transform="translate(224 871.4) rotate(-90)" font-size="10.4" fill="#151515" text-anchor="middle">22</text><rect x="218" y="886.30" width="5.8" height="1.1" fill="#000"/><text transform="translate(224 902.3) rotate(-90)" font-size="10.4" fill="#151515" text-anchor="middle">23</text><rect x="218" y="917.20" width="5.8" height="1.1" fill="#000"/><text transform="translate(224 933.2) rotate(-90)" font-size="10.4" fill="#151515" text-anchor="middle">24</text><rect x="218" y="948.10" width="5.8" height="1.1" fill="#000"/><text transform="translate(224 964.1) rotate(-90)" font-size="10.4" fill="#151515" text-anchor="middle">25</text><rect x="218" y="979.00" width="5.8" height="1.1" fill="#000"/><text transform="translate(224 995.0) rotate(-90)" font-size="10.4" fill="#151515" text-anchor="middle">26</text><rect x="218" y="1009.90" width="5.8" height="1.1" fill="#000"/><text transform="translate(224 1025.9) rotate(-90)" font-size="10.4" fill="#151515" text-anchor="middle">27</text><rect x="218" y="1040.80" width="5.8" height="1.1" fill="#000"/></g></svg>
<div class="a" style="left:369px;top:191px;width:667px;height:864px;background:#fff;border:1px solid #161616;box-shadow:.5px 1px 10px 1.5px rgba(0,0,0,.5)"></div>
<svg width="1200" height="1211" viewBox="0 0 1200 1211"><text x="447.3" y="279.6" font-size="10.7" fill="#111" font-weight="normal" text-anchor="start" textLength="99.4" lengthAdjust="spacingAndGlyphs">Wasserbilanz-Expert</text><text x="837.7" y="279.6" font-size="10.7" fill="#111" font-weight="normal" text-anchor="start" textLength="119.4" lengthAdjust="spacingAndGlyphs">Fachhochschule Münster</text><rect x="447" y="281.7" width="510.4" height="1.2" fill="#222"/><text x="447.2" y="310.3" font-size="12.9" fill="#111" font-weight="bold" text-anchor="start" textLength="218" lengthAdjust="spacingAndGlyphs">Zusammenfassung der Ergebnisse</text><rect x="447.90" y="313.55" width="508.20" height="1.5" fill="#1c1c1c"/><rect x="515.80" y="332.20" width="440.30" height="1.6" fill="#1c1c1c"/><rect x="515.80" y="352.15" width="440.30" height="1.7" fill="#1c1c1c"/><rect x="447.90" y="371.45" width="508.20" height="1.7" fill="#1c1c1c"/><rect x="447.90" y="390.40" width="508.20" height="1.4" fill="#1c1c1c"/><rect x="447.90" y="409.55" width="508.20" height="1.1" fill="#333"/><rect x="447.90" y="428.50" width="508.20" height="1.4" fill="#1c1c1c"/><rect x="447.90" y="447.55" width="508.20" height="1.5" fill="#1c1c1c"/><rect x="447.85" y="313.60" width="1.5" height="135.40" fill="#1c1c1c"/><rect x="515.65" y="313.60" width="1.7" height="135.40" fill="#1c1c1c"/><rect x="662.30" y="313.60" width="1.8" height="135.40" fill="#1c1c1c"/><rect x="808.30" y="313.60" width="1.8" height="135.40" fill="#1c1c1c"/><rect x="954.80" y="313.60" width="1.2" height="135.40" fill="#333"/><rect x="564.30" y="332.30" width="1.4" height="21.40" fill="#1c1c1c"/><rect x="564.30" y="371.60" width="1.4" height="77.40" fill="#1c1c1c"/><rect x="612.90" y="332.30" width="1.4" height="21.40" fill="#1c1c1c"/><rect x="612.90" y="371.60" width="1.4" height="77.40" fill="#1c1c1c"/><rect x="711.00" y="332.30" width="1.4" height="21.40" fill="#1c1c1c"/><rect x="711.00" y="371.60" width="1.4" height="77.40" fill="#1c1c1c"/><rect x="759.70" y="332.30" width="1.4" height="21.40" fill="#1c1c1c"/><rect x="759.70" y="371.60" width="1.4" height="77.40" fill="#1c1c1c"/><rect x="857.50" y="332.30" width="1.4" height="21.40" fill="#1c1c1c"/><rect x="857.50" y="371.60" width="1.4" height="77.40" fill="#1c1c1c"/><rect x="906.20" y="332.30" width="1.4" height="21.40" fill="#1c1c1c"/><rect x="906.20" y="371.60" width="1.4" height="77.40" fill="#1c1c1c"/><text x="589.9" y="327.5" font-size="10.0" fill="#111" font-weight="bold" text-anchor="middle" textLength="68.4" lengthAdjust="spacing">Wasserbilanz</text><text x="736.2" y="327.5" font-size="10.0" fill="#111" font-weight="bold" text-anchor="middle" textLength="87" lengthAdjust="spacing">Aufteilungsfaktor</text><text x="882.7" y="327.5" font-size="10.0" fill="#111" font-weight="bold" text-anchor="middle" textLength="63.6" lengthAdjust="spacing">Abweichung</text><text x="540.8" y="346.7" font-size="10.0" fill="#111" font-weight="bold" text-anchor="middle" textLength="14.2" lengthAdjust="spacing">RD</text><text x="589.3" y="346.7" font-size="10.0" fill="#111" font-weight="bold" text-anchor="middle" textLength="25" lengthAdjust="spacing">GWN</text><text x="638.4" y="346.7" font-size="10.0" fill="#111" font-weight="bold" text-anchor="middle" textLength="19.2" lengthAdjust="spacing">ETa</text><text x="687.5" y="346.7" font-size="10.0" fill="#111" font-weight="bold" text-anchor="middle" textLength="5.4" lengthAdjust="spacing">a</text><text x="736.0" y="346.7" font-size="10.0" fill="#111" font-weight="bold" text-anchor="middle" textLength="5.8" lengthAdjust="spacing">g</text><text x="784.8" y="346.7" font-size="10.0" fill="#111" font-weight="bold" text-anchor="middle" textLength="5.4" lengthAdjust="spacing">v</text><text x="833.7" y="346.7" font-size="10.0" fill="#111" font-weight="bold" text-anchor="middle" textLength="5.4" lengthAdjust="spacing">a</text><text x="882.5" y="346.7" font-size="10.0" fill="#111" font-weight="bold" text-anchor="middle" textLength="5.8" lengthAdjust="spacing">g</text><text x="931.1" y="346.7" font-size="10.0" fill="#111" font-weight="bold" text-anchor="middle" textLength="5.4" lengthAdjust="spacing">v</text><text x="452" y="365.6" font-size="10.0" fill="#111" font-weight="bold" text-anchor="start" textLength="41" lengthAdjust="spacing">Variante</text><text x="589.9" y="367.2" font-size="10.0" fill="#111" font-weight="normal" text-anchor="middle" textLength="24.5" lengthAdjust="spacing">(mm)</text><text x="736.2" y="367.2" font-size="10.0" fill="#111" font-weight="normal" text-anchor="middle" textLength="10" lengthAdjust="spacing">(-)</text><text x="882.3" y="367.2" font-size="10.0" fill="#111" font-weight="normal" text-anchor="middle" textLength="10" lengthAdjust="spacing">(-)</text><text x="452" y="385.3" font-size="10.0" fill="#111" font-weight="normal" text-anchor="start" textLength="44.3" lengthAdjust="spacing">unbebaut</text><text x="540.8" y="385.3" font-size="10.0" fill="#111" font-weight="normal" text-anchor="middle" textLength="20.4" lengthAdjust="spacing">66,2</text><text x="589.3" y="385.3" font-size="10.0" fill="#111" font-weight="normal" text-anchor="middle" textLength="26.3" lengthAdjust="spacing">264,8</text><text x="638.4" y="385.3" font-size="10.0" fill="#111" font-weight="normal" text-anchor="middle" textLength="17.5" lengthAdjust="spacing">469</text><text x="687.5" y="385.3" font-size="10.0" fill="#111" font-weight="normal" text-anchor="middle" textLength="26.3" lengthAdjust="spacing">0,083</text><text x="736.0" y="385.3" font-size="10.0" fill="#111" font-weight="normal" text-anchor="middle" textLength="26.3" lengthAdjust="spacing">0,331</text><text x="784.8" y="385.3" font-size="10.0" fill="#111" font-weight="normal" text-anchor="middle" textLength="26.3" lengthAdjust="spacing">0,586</text><text x="452" y="404.5" font-size="10.0" fill="#111" font-weight="normal" text-anchor="start" textLength="32.7" lengthAdjust="spacing">bebaut</text><text x="540.8" y="404.5" font-size="10.0" fill="#111" font-weight="normal" text-anchor="middle" textLength="17.5" lengthAdjust="spacing">300</text><text x="589.3" y="404.5" font-size="10.0" fill="#111" font-weight="normal" text-anchor="middle" textLength="17.5" lengthAdjust="spacing">179</text><text x="638.4" y="404.5" font-size="10.0" fill="#111" font-weight="normal" text-anchor="middle" textLength="17.5" lengthAdjust="spacing">322</text><text x="687.5" y="404.5" font-size="10.0" fill="#111" font-weight="normal" text-anchor="middle" textLength="26.3" lengthAdjust="spacing">0,375</text><text x="736.0" y="404.5" font-size="10.0" fill="#111" font-weight="normal" text-anchor="middle" textLength="26.3" lengthAdjust="spacing">0,223</text><text x="784.8" y="404.5" font-size="10.0" fill="#111" font-weight="normal" text-anchor="middle" textLength="26.3" lengthAdjust="spacing">0,402</text><text x="833.7" y="404.5" font-size="10.0" fill="#111" font-weight="normal" text-anchor="middle" textLength="26.3" lengthAdjust="spacing">0,292</text><text x="882.5" y="404.5" font-size="10.0" fill="#111" font-weight="normal" text-anchor="middle" textLength="29.8" lengthAdjust="spacing">-0,108</text><text x="931.1" y="404.5" font-size="10.0" fill="#111" font-weight="normal" text-anchor="middle" textLength="29.8" lengthAdjust="spacing">-0,184</text><text x="452" y="423.7" font-size="10.0" fill="#111" font-weight="normal" text-anchor="start" textLength="45" lengthAdjust="spacing">Gründach</text><text x="540.8" y="423.7" font-size="10.0" fill="#111" font-weight="normal" text-anchor="middle" textLength="17.5" lengthAdjust="spacing">229</text><text x="589.3" y="423.7" font-size="10.0" fill="#111" font-weight="normal" text-anchor="middle" textLength="17.5" lengthAdjust="spacing">179</text><text x="638.4" y="423.7" font-size="10.0" fill="#111" font-weight="normal" text-anchor="middle" textLength="17.5" lengthAdjust="spacing">392</text><text x="687.5" y="423.7" font-size="10.0" fill="#111" font-weight="normal" text-anchor="middle" textLength="26.3" lengthAdjust="spacing">0,287</text><text x="736.0" y="423.7" font-size="10.0" fill="#111" font-weight="normal" text-anchor="middle" textLength="26.3" lengthAdjust="spacing">0,223</text><text x="784.8" y="423.7" font-size="10.0" fill="#111" font-weight="normal" text-anchor="middle" textLength="26.3" lengthAdjust="spacing">0,490</text><text x="833.7" y="423.7" font-size="10.0" fill="#111" font-weight="normal" text-anchor="middle" textLength="26.3" lengthAdjust="spacing">0,204</text><text x="882.5" y="423.7" font-size="10.0" fill="#111" font-weight="normal" text-anchor="middle" textLength="29.8" lengthAdjust="spacing">-0,108</text><text x="931.1" y="423.7" font-size="10.0" fill="#111" font-weight="normal" text-anchor="middle" textLength="29.8" lengthAdjust="spacing">-0,096</text><text x="452" y="442.9" font-size="10.0" fill="#111" font-weight="normal" text-anchor="start" textLength="60" lengthAdjust="spacing">Gründach&amp;V</text><text x="540.8" y="442.9" font-size="10.0" fill="#111" font-weight="normal" text-anchor="middle" textLength="11.7" lengthAdjust="spacing">35</text><text x="589.3" y="442.9" font-size="10.0" fill="#111" font-weight="normal" text-anchor="middle" textLength="17.5" lengthAdjust="spacing">354</text><text x="638.4" y="442.9" font-size="10.0" fill="#111" font-weight="normal" text-anchor="middle" textLength="17.5" lengthAdjust="spacing">411</text><text x="687.5" y="442.9" font-size="10.0" fill="#111" font-weight="normal" text-anchor="middle" textLength="26.3" lengthAdjust="spacing">0,043</text><text x="736.0" y="442.9" font-size="10.0" fill="#111" font-weight="normal" text-anchor="middle" textLength="26.3" lengthAdjust="spacing">0,443</text><text x="784.8" y="442.9" font-size="10.0" fill="#111" font-weight="normal" text-anchor="middle" textLength="26.3" lengthAdjust="spacing">0,514</text><text x="833.7" y="442.9" font-size="10.0" fill="#111" font-weight="normal" text-anchor="middle" textLength="29.8" lengthAdjust="spacing">-0,039</text><text x="882.5" y="442.9" font-size="10.0" fill="#111" font-weight="normal" text-anchor="middle" textLength="26.3" lengthAdjust="spacing">0,112</text><text x="931.1" y="442.9" font-size="10.0" fill="#111" font-weight="normal" text-anchor="middle" textLength="29.8" lengthAdjust="spacing">-0,072</text><text x="447.4" y="477" font-size="12.9" fill="#111" font-weight="bold" text-anchor="start" textLength="183.8" lengthAdjust="spacingAndGlyphs">Vergleich der Wasserbilanzen</text><rect x="447" y="479.5" width="490" height="1" fill="#7c7c7c"/><text x="447.4" y="710.6" font-size="12.9" fill="#111" font-weight="bold" text-anchor="start" textLength="255.4" lengthAdjust="spacingAndGlyphs">Abweichungen vom unbebauten Zustand</text><rect x="447" y="713" width="490" height="1" fill="#7c7c7c"/><rect x="459.5" y="490.4" width="371.5" height="182.4" rx="8" fill="#fff" stroke="#c2c2c2" stroke-width="1.1"/><rect x="506.6" y="641.25" width="6" height="1.5" fill="#505050"/><text x="501.4" y="644.5" font-size="8.5" fill="#555" font-weight="normal" text-anchor="end">0</text><rect x="508.6" y="634.40" width="4" height="1.3" fill="#5a5a5a"/><rect x="506.6" y="627.35" width="6" height="1.5" fill="#505050"/><text x="501.4" y="630.6" font-size="8.5" fill="#555" font-weight="normal" text-anchor="end">50</text><rect x="508.6" y="620.50" width="4" height="1.3" fill="#5a5a5a"/><rect x="506.6" y="613.45" width="6" height="1.5" fill="#505050"/><text x="501.4" y="616.7" font-size="8.5" fill="#555" font-weight="normal" text-anchor="end">100</text><rect x="508.6" y="606.60" width="4" height="1.3" fill="#5a5a5a"/><rect x="506.6" y="599.55" width="6" height="1.5" fill="#505050"/><text x="501.4" y="602.8" font-size="8.5" fill="#555" font-weight="normal" text-anchor="end">150</text><rect x="508.6" y="592.70" width="4" height="1.3" fill="#5a5a5a"/><rect x="506.6" y="585.65" width="6" height="1.5" fill="#505050"/><text x="501.4" y="588.9" font-size="8.5" fill="#555" font-weight="normal" text-anchor="end">200</text><rect x="508.6" y="578.80" width="4" height="1.3" fill="#5a5a5a"/><rect x="506.6" y="571.75" width="6" height="1.5" fill="#505050"/><text x="501.4" y="575.0" font-size="8.5" fill="#555" font-weight="normal" text-anchor="end">250</text><rect x="508.6" y="564.90" width="4" height="1.3" fill="#5a5a5a"/><rect x="506.6" y="557.85" width="6" height="1.5" fill="#505050"/><text x="501.4" y="561.1" font-size="8.5" fill="#555" font-weight="normal" text-anchor="end">300</text><rect x="508.6" y="551.00" width="4" height="1.3" fill="#5a5a5a"/><rect x="506.6" y="543.95" width="6" height="1.5" fill="#505050"/><text x="501.4" y="547.2" font-size="8.5" fill="#555" font-weight="normal" text-anchor="end">350</text><rect x="508.6" y="537.10" width="4" height="1.3" fill="#5a5a5a"/><rect x="506.6" y="530.05" width="6" height="1.5" fill="#505050"/><text x="501.4" y="533.3" font-size="8.5" fill="#555" font-weight="normal" text-anchor="end">400</text><rect x="508.6" y="523.20" width="4" height="1.3" fill="#5a5a5a"/><rect x="506.6" y="516.15" width="6" height="1.5" fill="#505050"/><text x="501.4" y="519.4" font-size="8.5" fill="#555" font-weight="normal" text-anchor="end">450</text><rect x="508.6" y="509.30" width="4" height="1.3" fill="#5a5a5a"/><rect x="511.5" y="503.4" width="2.2" height="139.8" fill="#4c4c4c"/><rect x="511.5" y="641.2" width="302.3" height="2.2" fill="#484848"/><rect x="556.4" y="642" width="1.3" height="5.6" fill="#4a4a4a"/><rect x="530.30" y="624.10" width="13.35" height="17.90" fill="#4f81bd" stroke="#141414" stroke-width="1"/><rect x="543.65" y="559.10" width="13.35" height="82.90" fill="#c0504d" stroke="#141414" stroke-width="1"/><rect x="557.00" y="578.84" width="13.35" height="63.16" fill="#9bbb59" stroke="#141414" stroke-width="1"/><rect x="570.35" y="632.77" width="13.35" height="9.23" fill="#8064a2" stroke="#141414" stroke-width="1"/><rect x="662.6999999999999" y="642" width="1.3" height="5.6" fill="#4a4a4a"/><rect x="636.60" y="568.89" width="13.35" height="73.11" fill="#4f81bd" stroke="#141414" stroke-width="1"/><rect x="649.95" y="592.74" width="13.35" height="49.26" fill="#c0504d" stroke="#141414" stroke-width="1"/><rect x="663.30" y="592.74" width="13.35" height="49.26" fill="#9bbb59" stroke="#141414" stroke-width="1"/><rect x="676.65" y="544.09" width="13.35" height="97.91" fill="#8064a2" stroke="#141414" stroke-width="1"/><rect x="769.3" y="642" width="1.3" height="5.6" fill="#4a4a4a"/><rect x="743.20" y="512.12" width="13.35" height="129.88" fill="#4f81bd" stroke="#141414" stroke-width="1"/><rect x="756.55" y="552.98" width="13.35" height="89.02" fill="#c0504d" stroke="#141414" stroke-width="1"/><rect x="769.90" y="533.52" width="13.35" height="108.48" fill="#9bbb59" stroke="#141414" stroke-width="1"/><rect x="783.25" y="528.24" width="13.35" height="113.76" fill="#8064a2" stroke="#141414" stroke-width="1"/><text x="555.5" y="657.7" font-size="8.5" fill="#555" font-weight="normal" text-anchor="middle" textLength="67" lengthAdjust="spacingAndGlyphs">Direktabfluss RD</text><text x="659" y="657.7" font-size="8.5" fill="#555" font-weight="normal" text-anchor="middle" textLength="118" lengthAdjust="spacingAndGlyphs">Grundwasserneubildung GWN</text><text x="766.9" y="657.7" font-size="8.5" fill="#555" font-weight="normal" text-anchor="middle" textLength="66.5" lengthAdjust="spacingAndGlyphs">Verdunstung ETa</text><text transform="translate(485 573.2) rotate(-90)" font-size="8.5" fill="#555" stroke="#555" stroke-width=".3" text-anchor="middle">mm</text><rect x="846.6" y="559.8" width="18.4" height="7.8" fill="#4f81bd" stroke="#141414" stroke-width="1"/><text x="871" y="565.8" font-size="8.5" fill="#222" font-weight="normal" text-anchor="start" textLength="34.8" lengthAdjust="spacingAndGlyphs">unbebaut</text><rect x="846.6" y="571.4" width="18.4" height="7.8" fill="#c0504d" stroke="#141414" stroke-width="1"/><text x="871" y="577.4" font-size="8.5" fill="#222" font-weight="normal" text-anchor="start" textLength="25.7" lengthAdjust="spacingAndGlyphs">bebaut</text><rect x="846.6" y="583.0" width="18.4" height="7.8" fill="#9bbb59" stroke="#141414" stroke-width="1"/><text x="871" y="589.0" font-size="8.5" fill="#222" font-weight="normal" text-anchor="start" textLength="38" lengthAdjust="spacingAndGlyphs">Gründach</text><rect x="846.6" y="594.6" width="18.4" height="7.8" fill="#8064a2" stroke="#141414" stroke-width="1"/><text x="871" y="600.6" font-size="8.5" fill="#222" font-weight="normal" text-anchor="start" textLength="50" lengthAdjust="spacingAndGlyphs">Gründach&amp;V</text><rect x="459.5" y="724.2" width="419.5" height="182.6" rx="8" fill="#fff" stroke="#c2c2c2" stroke-width="1.1"/><path d="M514 864.20H861.2" stroke="#c9c9c9" stroke-width="1.1" stroke-dasharray="2.6 1.6"/><path d="M514 852.60H861.2" stroke="#c9c9c9" stroke-width="1.1" stroke-dasharray="2.6 1.6"/><path d="M514 841.00H861.2" stroke="#c9c9c9" stroke-width="1.1" stroke-dasharray="2.6 1.6"/><path d="M514 829.40H861.2" stroke="#c9c9c9" stroke-width="1.1" stroke-dasharray="2.6 1.6"/><path d="M514 817.80H861.2" stroke="#c9c9c9" stroke-width="1.1" stroke-dasharray="2.6 1.6"/><path d="M514 806.20H861.2" stroke="#c9c9c9" stroke-width="1.1" stroke-dasharray="2.6 1.6"/><path d="M514 794.60H861.2" stroke="#c9c9c9" stroke-width="1.1" stroke-dasharray="2.6 1.6"/><path d="M514 783.00H861.2" stroke="#c9c9c9" stroke-width="1.1" stroke-dasharray="2.6 1.6"/><path d="M514 771.40H861.2" stroke="#c9c9c9" stroke-width="1.1" stroke-dasharray="2.6 1.6"/><path d="M514 759.80H861.2" stroke="#c9c9c9" stroke-width="1.1" stroke-dasharray="2.6 1.6"/><path d="M514 748.20H861.2" stroke="#c9c9c9" stroke-width="1.1" stroke-dasharray="2.6 1.6"/><rect x="508.2" y="875.15" width="4.6" height="1.3" fill="#4c4c4c"/><text x="501.8" y="878.2" font-size="8.5" fill="#555" font-weight="normal" text-anchor="end">-0,2</text><rect x="509.6" y="863.55" width="3.2" height="1.3" fill="#555"/><rect x="508.2" y="851.95" width="4.6" height="1.3" fill="#4c4c4c"/><text x="501.8" y="855.0" font-size="8.5" fill="#555" font-weight="normal" text-anchor="end">-0,1</text><rect x="509.6" y="840.35" width="3.2" height="1.3" fill="#555"/><rect x="508.2" y="828.75" width="4.6" height="1.3" fill="#4c4c4c"/><text x="501.8" y="831.8" font-size="8.5" fill="#555" font-weight="normal" text-anchor="end">0</text><rect x="509.6" y="817.15" width="3.2" height="1.3" fill="#555"/><rect x="508.2" y="805.55" width="4.6" height="1.3" fill="#4c4c4c"/><text x="501.8" y="808.6" font-size="8.5" fill="#555" font-weight="normal" text-anchor="end">0,1</text><rect x="509.6" y="793.95" width="3.2" height="1.3" fill="#555"/><rect x="508.2" y="782.35" width="4.6" height="1.3" fill="#4c4c4c"/><text x="501.8" y="785.4" font-size="8.5" fill="#555" font-weight="normal" text-anchor="end">0,2</text><rect x="509.6" y="770.75" width="3.2" height="1.3" fill="#555"/><rect x="508.2" y="759.15" width="4.6" height="1.3" fill="#4c4c4c"/><text x="501.8" y="762.2" font-size="8.5" fill="#555" font-weight="normal" text-anchor="end">0,3</text><rect x="509.6" y="747.55" width="3.2" height="1.3" fill="#555"/><rect x="512.4" y="736.6" width="1.6" height="141" fill="#5a5a5a"/><rect x="512.4" y="876.2" width="349.6" height="1.9" fill="#454545"/><rect x="810.6" y="877" width="1.4" height="5.4" fill="#454545"/><rect x="538.4" y="739.7" width="11.40" height="21.90" fill="#fff"/><path d="M538.4 739.7V761.6M537.9 739.7H550.3" stroke="#0c0c0c" stroke-width="1.3" fill="none"/><text transform="translate(547.1 750.7) rotate(-90)" font-size="8.4" fill="#000" stroke="#000" stroke-width=".25" text-anchor="middle">0,29</text><rect x="558.2" y="854.4" width="12.10" height="25.60" fill="#fff"/><path d="M570.3 854.4V880" stroke="#0c0c0c" stroke-width="1.3" fill="none"/><text transform="translate(567.2 867.2) rotate(-90)" font-size="8.4" fill="#000" stroke="#000" stroke-width=".25" text-anchor="middle">-0,11</text><rect x="579.1" y="872.2" width="13.40" height="26.30" fill="#fff"/><path d="M579.1 872.2V898.5M592.5 872.2V898.5M578.6 898.5H593.0" stroke="#0c0c0c" stroke-width="1.3" fill="none"/><text transform="translate(588.8 885.4) rotate(-90)" font-size="8.4" fill="#000" stroke="#000" stroke-width=".25" text-anchor="middle">-0,18</text><rect x="660.9" y="759.7" width="12.30" height="22.30" fill="#fff"/><path d="M660.9 759.7V782M673.2 759.7V782" stroke="#0c0c0c" stroke-width="1.3" fill="none"/><text transform="translate(670.0 770.9) rotate(-90)" font-size="8.4" fill="#000" stroke="#000" stroke-width=".25" text-anchor="middle">0,20</text><rect x="681.4" y="854.4" width="12.50" height="25.80" fill="#fff"/><path d="M681.4 854.4V880.2M693.9 854.4V880.2" stroke="#0c0c0c" stroke-width="1.3" fill="none"/><text transform="translate(690.6 867.2) rotate(-90)" font-size="8.4" fill="#000" stroke="#000" stroke-width=".25" text-anchor="middle">-0,11</text><rect x="703.3" y="852" width="11.40" height="26.20" fill="#fff"/><path d="M703.3 852V878.2M714.7 852V878.2" stroke="#0c0c0c" stroke-width="1.3" fill="none"/><text transform="translate(712.0 866.0) rotate(-90)" font-size="8.4" fill="#000" stroke="#000" stroke-width=".25" text-anchor="middle">-0,10</text><rect x="805.4" y="781" width="11.40" height="22.40" fill="#fff"/><path d="M805.4 781V803.4M804.9 781H817.3" stroke="#0c0c0c" stroke-width="1.3" fill="none"/><text transform="translate(814.1 792.2) rotate(-90)" font-size="8.4" fill="#000" stroke="#000" stroke-width=".25" text-anchor="middle">0,11</text><rect x="784.8" y="838.4" width="11.70" height="25.10" fill="#fff"/><path d="M784.8 838.4V863.5M784.3 863.5H797.0" stroke="#0c0c0c" stroke-width="1.3" fill="none"/><text transform="translate(793.6 851.0) rotate(-90)" font-size="8.4" fill="#000" stroke="#000" stroke-width=".25" text-anchor="middle">-0,04</text><rect x="825.9" y="846.1" width="12.50" height="26.20" fill="#fff"/><path d="M825.9 846.1V872.3M838.4 846.1V872.3" stroke="#0c0c0c" stroke-width="1.3" fill="none"/><text transform="translate(835.1 860.0) rotate(-90)" font-size="8.4" fill="#000" stroke="#000" stroke-width=".25" text-anchor="middle">-0,07</text><rect x="533.60" y="761.66" width="20.65" height="67.74" fill="#4169e1" stroke="#101010" stroke-width="1"/><rect x="554.25" y="829.40" width="20.65" height="25.06" fill="#d0ba60" stroke="#101010" stroke-width="1"/><rect x="574.90" y="829.40" width="20.65" height="42.69" fill="#87cefa" stroke="#101010" stroke-width="1"/><rect x="657.20" y="782.07" width="20.65" height="47.33" fill="#4169e1" stroke="#101010" stroke-width="1"/><rect x="677.85" y="829.40" width="20.65" height="25.06" fill="#d0ba60" stroke="#101010" stroke-width="1"/><rect x="698.50" y="829.40" width="20.65" height="22.27" fill="#87cefa" stroke="#101010" stroke-width="1"/><rect x="779.80" y="829.40" width="20.65" height="9.05" fill="#4169e1" stroke="#101010" stroke-width="1"/><rect x="800.45" y="803.42" width="20.65" height="25.98" fill="#d0ba60" stroke="#101010" stroke-width="1"/><rect x="821.10" y="829.40" width="20.65" height="16.70" fill="#87cefa" stroke="#101010" stroke-width="1"/><rect x="563.8" y="880.4" width="1.3" height="2.3" fill="#454545"/><rect x="687" y="880.6" width="1.3" height="2.1" fill="#454545"/><text x="563.2" y="891.4" font-size="8.5" fill="#555" font-weight="normal" text-anchor="middle" textLength="25.4" lengthAdjust="spacingAndGlyphs">bebaut</text><text x="686.2" y="891.4" font-size="8.5" fill="#555" font-weight="normal" text-anchor="middle" textLength="37.9" lengthAdjust="spacingAndGlyphs">Gründach</text><text x="810.3" y="891.4" font-size="8.5" fill="#555" font-weight="normal" text-anchor="middle" textLength="50" lengthAdjust="spacingAndGlyphs">Gründach&amp;V</text><text transform="translate(485 806.5) rotate(-90)" font-size="8.5" fill="#555" text-anchor="middle" textLength="81.3" lengthAdjust="spacingAndGlyphs">absolute Abweichung</text><rect x="894.6" y="799.5" width="18.6" height="8" fill="#4169e1" stroke="#101010" stroke-width="1"/><text x="919.3" y="805.7" font-size="8.5" fill="#222" font-weight="normal" text-anchor="start">a</text><rect x="894.6" y="811.1" width="18.6" height="8" fill="#d0ba60" stroke="#101010" stroke-width="1"/><text x="919.3" y="817.3" font-size="8.5" fill="#222" font-weight="normal" text-anchor="start">g</text><rect x="894.6" y="822.7" width="18.6" height="8" fill="#87cefa" stroke="#101010" stroke-width="1"/><text x="919.3" y="828.9" font-size="8.5" fill="#222" font-weight="normal" text-anchor="start">v</text><rect x="447" y="942.2" width="510.4" height="1.4" fill="#333"/><text x="670.8" y="954.2" font-size="10.7" fill="#111" font-weight="normal" text-anchor="start" textLength="62" lengthAdjust="spacingAndGlyphs">Seite 1 von 9</text><text x="842.1" y="954.2" font-size="10.7" fill="#111" font-weight="normal" text-anchor="start" textLength="114.8" lengthAdjust="spacingAndGlyphs">WABILA-Version 1.0.0.0</text><g transform="translate(462.6 959.4)"><path d="M0 -8L8.2 0L0 8L-8.2 0Z" fill="#3a2c84"/><g transform="rotate(45)" stroke="#fff" stroke-width="1" fill="none"><path d="M-3.2 -3.6V3.2M-0.8 -3.6V3.2M1.6 -3.6V3.2M-4.6 3.4H3.6"/></g></g><text x="478" y="958" font-size="4.6" fill="#333" font-weight="bold" text-anchor="start" textLength="34" lengthAdjust="spacingAndGlyphs">FH MÜNSTER</text><text x="478" y="964.2" font-size="5.2" fill="#555" font-weight="normal" text-anchor="start" textLength="75.6" lengthAdjust="spacingAndGlyphs">University of Applied Sciences</text></svg>
</div></body></html>
